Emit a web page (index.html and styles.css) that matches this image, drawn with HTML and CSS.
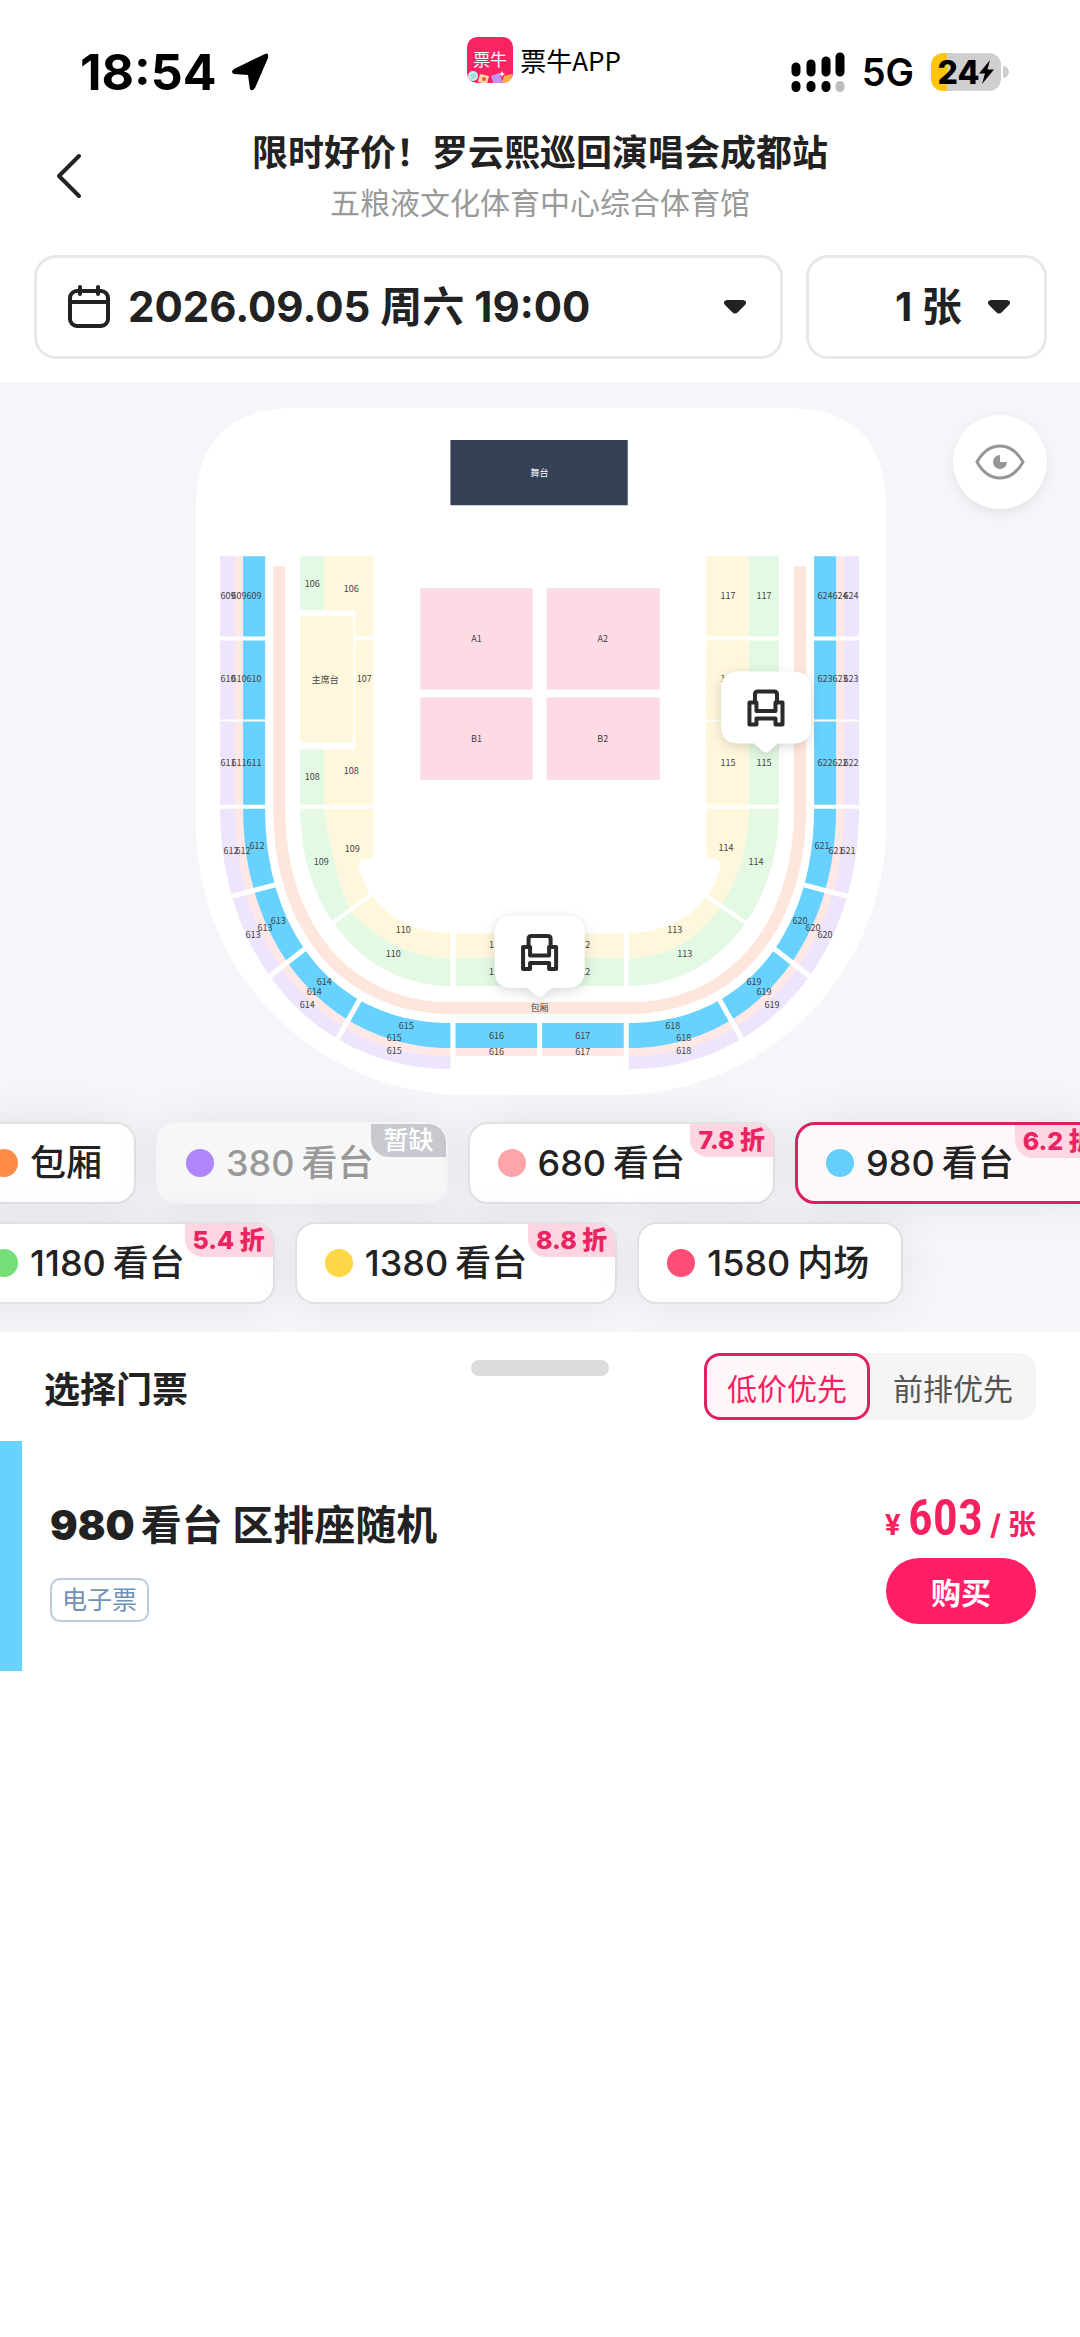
FILE: index.html
```html
<!DOCTYPE html>
<html lang="zh-CN">
<head>
  <meta charset="UTF-8" />
  <meta name="viewport" content="width=device-width, initial-scale=1.0"/>
  <title>选择门票</title>
  <link rel="stylesheet" href="styles.css">
</head>
<body>

  <!-- Status Bar -->
  <div class="status-bar">
    <div class="status-left">
      <span class="clock">18:54</span>
      <svg width="40" height="40" viewBox="0 0 40 40"><path d="M35 2 L4 17 Q0 20 4 22 L18 23 L20 37 Q22 40 25 36 L38 6 Q39 0 35 2Z"/></svg>
    </div>
    <div class="status-app">
      <span class="app-logo">
        <span>票牛</span>
        <svg width="46" height="12" viewBox="0 0 46 12">
          <circle cx="6" cy="5" r="5" fill="#c8eef0"/>
          <path d="M3 5l5-2M4 8l5-3" stroke="#5cc4c4" stroke-width="1"/>
          <path d="M13 3l9 2-2 8-9-2z" fill="#ffd9a0"/>
          <circle cx="17" cy="8" r="2" fill="#e8544c"/>
          <path d="M24 5l8-3 4 9-9 3z" fill="#c792f5"/>
          <path d="M37 5l8-2-1 9h-9z" fill="#ffb04a"/>
          <path d="M35 0l1 2 2 1-2 1-1 2-1-2-2-1 2-1z" fill="#fff"/>
        </svg>
      </span>
      <span>票牛APP</span>
    </div>
    <div class="status-right">
      <svg width="54" height="40" viewBox="0 0 54 40" stroke-width="9" stroke-linecap="round">
        <path d="M5 15v5M20 12v8M35 9v11M49 5v15" stroke="#000"/>
        <path d="M5 33.500v2M20 33.500v2M35 33.500v2" stroke="#000"/>
        <path d="M49 33.500v2" stroke="#bdbdbd"/>
      </svg>
      <span class="network">5G</span>
      <span class="battery">24<svg width="15" height="24" viewBox="0 0 15 24"><path d="M11 0 L0 13.500 H6 L3 24 L15 9.500 H8.500Z"/></svg></span>
    </div>
  </div>

  <!-- Event Header -->
  <header class="event-header">
    <button class="back-btn" aria-label="返回">
      <svg width="28" height="46" viewBox="0 0 28 46" fill="none" stroke="#222" stroke-width="4" stroke-linecap="round" stroke-linejoin="round"><path d="M24 3 L4 23 L24 43"/></svg>
    </button>
    <h1>限时好价！罗云熙巡回演唱会成都站</h1>
    <p>五粮液文化体育中心综合体育馆</p>
  </header>

  <!-- Date and Count -->
  <div class="filters">
    <div class="picker picker-date">
      <svg width="42" height="44" viewBox="0 0 42 44" fill="none" stroke="#222" stroke-width="4" stroke-linecap="round"><rect x="2" y="6" width="38" height="35" rx="7"/><path d="M2 17h38M12 2v7M30 2v7"/></svg>
      <select aria-label="场次">
        <option>2026.09.05 周六 19:00</option>
      </select>
      <svg class="caret" width="22" height="14" viewBox="0 0 22 14"><path d="M3 0h16q5 1 2 5l-7 7q-3 3-6 0L1 5Q-2 1 3 0Z"/></svg>
    </div>
    <div class="picker picker-count">
      <select aria-label="张数">
        <option>1 张</option>
      </select>
      <svg class="caret" width="22" height="14" viewBox="0 0 22 14"><path d="M3 0h16q5 1 2 5l-7 7q-3 3-6 0L1 5Q-2 1 3 0Z"/></svg>
    </div>
  </div>

  <!-- Seat Map -->
  <main class="map">
    <svg class="venue" viewBox="194 408 690 686">
      <path fill="#fff" d="M296 408H785Q885 408 885 508V824A270 270 0 0 1 615 1094H466A270 270 0 0 1 196 824V508Q196 408 296 408Z"/>

      <!-- upper tier: 380, 680, 980 -->
      <path fill="#eee5fd" d="M220 556V808C220 959 317 1068 450 1068H628C761 1068 858 959 858 808V556Z"/>
      <path fill="#fff" d="M455 1040h168v40h-168z"/>
      <path fill="#ffe8e6" d="M235 556V808C235 951 325 1055 450 1055H628C753 1055 843 951 843 808V556Z"/>
      <path fill="#67d2ff" d="M243 556V808C243 947 330 1047 450 1047H628C748 1047 835 947 835 808V556Z"/>
      <path fill="#fff" d="M265 550V808C265 936 339 1022 450 1022H628C739 1022 813 936 813 808V550Z"/>
      <path stroke="#fff" stroke-width="5" d="M226 897L275 884M266 978L307 946M336 1040L362 994M852 897L803 884M812 978L771 946M742 1040L716 994M452.500 1018V1074M539 1018V1060M625.500 1018V1074"/>
      <path stroke="#fff" stroke-width="4" d="M216 638H266M812 638H862M216 806H266M812 806H862"/>
      <path stroke="#fff" stroke-width="2" d="M216 720H266M812 720H862"/>

      <!-- boxes -->
      <path fill="none" stroke="#ffe6dc" stroke-width="12" d="M279 566V808C279 927 347 1007 450 1007H628C731 1007 799 927 799 808V566"/>

      <!-- lower tier: 1180 and 1380 -->
      <path fill="#e3f9e3" d="M300 556V808C300 909 364 985 450 985H628C714 985 778 909 778 808V556Z"/>
      <path fill="#fff7dc" d="M324 556V808C330 850 338 880 350 910C372 936 410 957 450 957H628C705 957 748 880 748 808V556Z"/>
      <path fill="#fff" d="M373 550V854Q373 858 367 858Q356 859 359 867C368 906 405 932 450 932H628C673 932 710 906 719 867Q722 859 711 858Q705 858 705 854V550Z"/>
      <path fill="#fff" d="M298 610h57v139h-57z"/>
      <path fill="#fff7dc" d="M300 616h53v126h-53z"/>
      <path stroke="#fff" stroke-width="4" d="M329 925L374 891M749 925L700 891M354 638H375M703 638H780M298 806H375M703 806H780"/>
      <path stroke="#fff" stroke-width="2" d="M703 720H780"/>
      <path stroke="#fff" stroke-width="5" d="M452.500 928V988M625.500 928V988"/>

      <!-- floor -->
      <path fill="#344156" d="M450 440h177v65h-177z"/>
      <path fill="#fedae5" d="M420 588h112v101h-112zM546 588h113v101h-113zM420 697h112v82h-112zM546 697h113v82h-113z"/>

      <g class="map-labels">
        <text class="stage-label" x="539" y="476">舞台</text>
        <text x="476" y="642">A1</text><text x="602" y="642">A2</text>
        <text x="476" y="741">B1</text><text x="602" y="741">B2</text>
        <text x="228" y="599">609</text><text x="239" y="599">609</text><text x="254" y="599">609</text>
        <text x="228" y="682">610</text><text x="239" y="682">610</text><text x="254" y="682">610</text>
        <text x="228" y="765">611</text><text x="239" y="765">611</text><text x="254" y="765">611</text>
        <text x="231" y="853">612</text><text x="243" y="853">612</text><text x="257" y="848">612</text>
        <text x="253" y="937">613</text><text x="265" y="930">613</text><text x="278" y="923">613</text>
        <text x="307" y="1007">614</text><text x="314" y="994">614</text><text x="324" y="984">614</text>
        <text x="394" y="1053">615</text><text x="394" y="1040">615</text><text x="406" y="1028">615</text>
        <text x="496" y="1038">616</text><text x="496" y="1054">616</text>
        <text x="582" y="1038">617</text><text x="582" y="1054">617</text>
        <text x="672" y="1028">618</text><text x="683" y="1040">618</text><text x="683" y="1053">618</text>
        <text x="753" y="984">619</text><text x="763" y="994">619</text><text x="771" y="1007">619</text>
        <text x="799" y="923">620</text><text x="812" y="930">620</text><text x="824" y="937">620</text>
        <text x="821" y="848">621</text><text x="835" y="853">621</text><text x="847" y="853">621</text>
        <text x="824" y="765">622</text><text x="839" y="765">622</text><text x="850" y="765">622</text>
        <text x="824" y="682">623</text><text x="839" y="682">623</text><text x="850" y="682">623</text>
        <text x="824" y="599">624</text><text x="839" y="599">624</text><text x="850" y="599">624</text>
        <text x="312" y="587">106</text><text x="351" y="592">106</text>
        <text x="325" y="683">主席台</text><text x="364" y="682">107</text>
        <text x="312" y="779">108</text><text x="351" y="773">108</text>
        <text x="352" y="851">109</text><text x="321" y="864">109</text>
        <text x="403" y="932">110</text><text x="393" y="956">110</text>
        <text x="496" y="947">111</text><text x="496" y="974">111</text>
        <text x="582" y="947">112</text><text x="582" y="974">112</text>
        <text x="674" y="932">113</text><text x="684" y="956">113</text>
        <text x="725" y="850">114</text><text x="755" y="864">114</text>
        <text x="727" y="765">115</text><text x="763" y="765">115</text>
        <text x="727" y="682">116</text><text x="763" y="682">116</text>
        <text x="727" y="599">117</text><text x="763" y="599">117</text>
        <text x="539" y="1010">包厢</text>
      </g>

      <!-- seat pins -->
      <defs>
        <g id="seat-pin">
          <path fill="#fff" d="M-27 -81H27Q45 -81 45 -63V-27Q45 -9 27 -9H12L3 -1Q0 1 -3 -1L-12 -9H-27Q-45 -9 -45 -27V-63Q-45 -81 -27 -81Z"/>
          <g fill="none" stroke="#2a2a2a" stroke-width="4" stroke-linejoin="round">
            <path d="M-11 -50V-58Q-11 -61 -8 -61H8Q11 -61 11 -58V-50"/>
            <path d="M-16.500 -50H-9.500V-41.500H9.500V-50H16.500V-28H9.500V-34H-9.500V-28H-16.500Z"/>
          </g>
        </g>
      </defs>
      <use class="pin" href="#seat-pin" x="765" y="752"/>
      <use class="pin" href="#seat-pin" x="539" y="996"/>
    </svg>

    <button class="eye-btn" aria-label="预览">
      <svg width="50" height="36" viewBox="0 0 50 36" fill="none" stroke="#969696" stroke-width="3"><path d="M2 18Q11 2 25 2T48 18Q39 34 25 34T2 18Z"/><path fill="#969696" stroke="none" d="M25 18V11A7 7 0 1 0 32 18Z"/></svg>
    </button>

    <!-- Price Chips -->
    <div class="chips">
      <div class="chip-row">
        <button class="chip"><i class="dot orange"></i>包厢</button>
        <button class="chip sold-out"><i class="dot purple"></i><b>380</b>看台<span class="badge">暂缺</span></button>
        <button class="chip has-badge"><i class="dot pink"></i><b>680</b>看台<span class="badge">7.8 折</span></button>
        <button class="chip has-badge active"><i class="dot blue"></i><b>980</b>看台<span class="badge">6.2 折</span></button>
      </div>
      <div class="chip-row">
        <button class="chip has-badge"><i class="dot green"></i><b>1180</b>看台<span class="badge">5.4 折</span></button>
        <button class="chip has-badge"><i class="dot yellow"></i><b>1380</b>看台<span class="badge">8.8 折</span></button>
        <button class="chip"><i class="dot red"></i><b>1580</b>内场</button>
      </div>
    </div>
  </main>

  <!-- Ticket List -->
  <section class="sheet">
    <div class="sheet-header">
      <span class="handle"></span>
      <h2>选择门票</h2>
      <div class="sort">
        <button class="selected">低价优先</button>
        <button>前排优先</button>
      </div>
    </div>
    <article class="ticket">
      <div class="ticket-info">
        <h3><b>980</b>看台 区排座随机</h3>
        <span class="tag">电子票</span>
      </div>
      <div class="ticket-buy">
        <div class="price"><span>¥</span><strong>603</strong><span>/</span><span>张</span></div>
        <button class="buy-btn">购买</button>
      </div>
    </article>
  </section>

</body>
</html>
```
FILE: styles.css
```css
* {
  box-sizing: border-box;
}

body {
  font-family: Inter, 'Noto Sans CJK SC', sans-serif;
  background: #fff;
  color: #222;
  margin: 0;
  overflow-x: hidden;
}

h1, h2, h3, p {
  margin: 0;
}

button, select {
  font-family: inherit;
  color: inherit;
  background: none;
  border: none;
  padding: 0;
  cursor: pointer;
}

svg {
  display: block;
  flex-shrink: 0;
}

.status-bar {
  display: grid;
  grid-template-columns: 1fr auto 1fr;
  align-items: center;
  height: 124px;
  padding: 20px 72px 0 80px;
  color: #000;
}

.status-left, .status-right, .status-app {
  display: flex;
  align-items: center;
}

.status-left {
  gap: 13px;
}

.clock {
  font-size: 50px;
  font-weight: 700;
}

.status-app {
  align-self: start;
  gap: 7px;
  margin-top: 17px;
  font-family: 'Noto Sans CJK SC', sans-serif;
  font-size: 26px;
  line-height: 46px;
}

.app-logo {
  display: flex;
  flex-direction: column;
  justify-content: flex-end;
  align-items: center;
  width: 46px;
  height: 46px;
  overflow: hidden;
  border-radius: 10px;
  background: #fb2362;
  color: #fff;
  font-size: 17px;
  line-height: 24px;
}

.status-right {
  justify-content: flex-end;
  gap: 17px;
}

.network {
  font-size: 38px;
  font-weight: 600;
}

.battery {
  position: relative;
  display: flex;
  align-items: center;
  justify-content: center;
  width: 70px;
  height: 38px;
  margin-right: 7px;
  border-radius: 12px;
  background: linear-gradient(to right, #ffc40c 16px, #cfcfcf 16px);
  font-size: 32px;
  font-weight: 800;
}

.battery::after {
  content: "";
  position: absolute;
  right: -8px;
  top: 13px;
  width: 6px;
  height: 12px;
  border-radius: 0 6px 6px 0;
  background: #cfcfcf;
}

.event-header {
  position: relative;
  height: 131px;
  padding-top: 3px;
  text-align: center;
}

.event-header h1 {
  font-size: 36px;
  font-weight: 700;
  line-height: 52px;
}

.event-header p {
  font-size: 30px;
  line-height: 48px;
  color: #999;
}

.back-btn {
  position: absolute;
  left: 55px;
  top: 29px;
}

.filters {
  display: flex;
  gap: 23px;
  padding: 0 33px 23px 34px;
}

.picker {
  display: flex;
  align-items: center;
  height: 104px;
  padding: 0 34px 0 31px;
  border: 3px solid #e8e8e8;
  border-radius: 22px;
}

.picker select {
  appearance: none;
  outline: none;
  font-size: 42px;
  font-weight: 700;
  line-height: 60px;
}

.picker-date {
  flex: 1;
  gap: 18px;
}

.picker-date select {
  flex: 1;
}

.picker-count {
  width: 241px;
  gap: 26px;
  justify-content: flex-end;
}

.picker-count select {
  font-size: 40px;
}

.caret {
  fill: #222;
}

.map {
  position: relative;
  padding: 26px 0 28px;
  background: #f4f6fa;
  overflow: hidden;
}

.venue {
  width: 64%;
  margin: 0 auto;
}

.map-labels {
  font-family: 'Noto Sans CJK SC', sans-serif;
  font-size: 9px;
  fill: #444;
  text-anchor: middle;
}

.stage-label {
  fill: #fff;
}

.pin {
  filter: drop-shadow(0 3px 6px rgba(0, 0, 0, 0.15));
}

.eye-btn {
  position: absolute;
  top: 33px;
  right: 33px;
  display: flex;
  align-items: center;
  justify-content: center;
  width: 94px;
  height: 94px;
  border-radius: 50%;
  background: #fff;
  box-shadow: 0 4px 12px rgba(0, 0, 0, 0.08);
}

.chips {
  display: flex;
  flex-direction: column;
  gap: 18px;
  margin-top: 27px;
}

/* rows are scrolled a little to the left */
.chip-row {
  display: flex;
  gap: 20px;
  margin-left: -40px;
}

.chip {
  position: relative;
  display: flex;
  flex-shrink: 0;
  align-items: center;
  height: 82px;
  padding: 0 32px 0 28px;
  border: 2px solid #dfe1e3;
  border-radius: 20px;
  background: #fff;
  box-shadow: 0 0 44px rgba(0, 0, 0, 0.08);
  font-size: 36px;
  font-weight: 500;
  line-height: 50px;
  white-space: nowrap;
}

.chip b {
  margin-right: 7px;
  font-weight: 500;
}

.chip.has-badge {
  padding-right: 88px;
}

.chip.active {
  border: 3px solid #dc2062;
  background: #fff8fa;
}

.chip.sold-out {
  padding-right: 72px;
  border-color: #f4f5f6;
  background: #f7f7f7;
  color: #999;
}

.dot {
  width: 28px;
  height: 28px;
  margin-right: 12px;
  border-radius: 50%;
}

.dot.orange { background: #ff8c46; }
.dot.purple { background: #af87fb; }
.dot.pink { background: #ffa5aa; }
.dot.blue { background: #64cffc; }
.dot.green { background: #73df76; }
.dot.yellow { background: #ffd747; }
.dot.red { background: #ff4d78; }

.badge {
  position: absolute;
  top: 0;
  right: 0;
  padding: 0 8px;
  border-radius: 0 18px 0 18px;
  background: #fed6e1;
  color: #ea2462;
  font-size: 25px;
  font-weight: 800;
  line-height: 33px;
}

.sold-out .badge {
  padding: 0 12px;
  background: #c7c9cf;
  color: #fff;
  font-weight: 500;
}

.sheet {
  position: relative;
  background: #fff;
}

.sheet-header {
  position: relative;
  display: flex;
  align-items: center;
  justify-content: space-between;
  height: 109px;
  padding: 0 44px;
}

.sheet-header h2 {
  font-size: 36px;
  font-weight: 700;
}

.handle {
  position: absolute;
  top: 28px;
  left: 50%;
  width: 138px;
  height: 16px;
  margin-left: -69px;
  border-radius: 8px;
  background: #dcdcdc;
}

.sort {
  display: flex;
  border-radius: 16px;
  background: #f5f5f5;
}

.sort button {
  width: 166px;
  height: 67px;
  border: 3px solid transparent;
  border-radius: 16px;
  font-size: 30px;
  color: #555;
}

.sort .selected {
  border-color: #e02062;
  background: #fff6f8;
  color: #f82160;
}

.ticket {
  display: flex;
  justify-content: space-between;
  padding: 49px 44px 47px 28px;
  border-left: 22px solid #67d2ff;
  box-shadow: 0 2px 0 #f3f3f3;
}

.ticket-info h3 {
  font-size: 41px;
  font-weight: 700;
  line-height: 70px;
}

.ticket-info b {
  margin-right: 6px;
}

.tag {
  display: inline-block;
  margin-top: 18px;
  padding: 0 10px;
  border: 2px solid #bccbdc;
  border-radius: 10px;
  font-size: 25px;
  line-height: 40px;
  color: #7191b8;
}

.ticket-buy {
  display: flex;
  flex-direction: column;
  align-items: flex-end;
}

.price {
  display: flex;
  align-items: baseline;
  gap: 7px;
  height: 68px;
  font-size: 28px;
  font-weight: 700;
  line-height: 56px;
  color: #f82160;
}

.price strong {
  font-family: 'Liberation Sans Narrow', 'Roboto Condensed', Roboto, sans-serif;
  font-size: 50px;
  font-weight: 600;
}

.buy-btn {
  width: 150px;
  height: 66px;
  border-radius: 33px;
  background: #ff1f64;
  color: #fff;
  font-size: 30px;
  font-weight: 700;
}
```
